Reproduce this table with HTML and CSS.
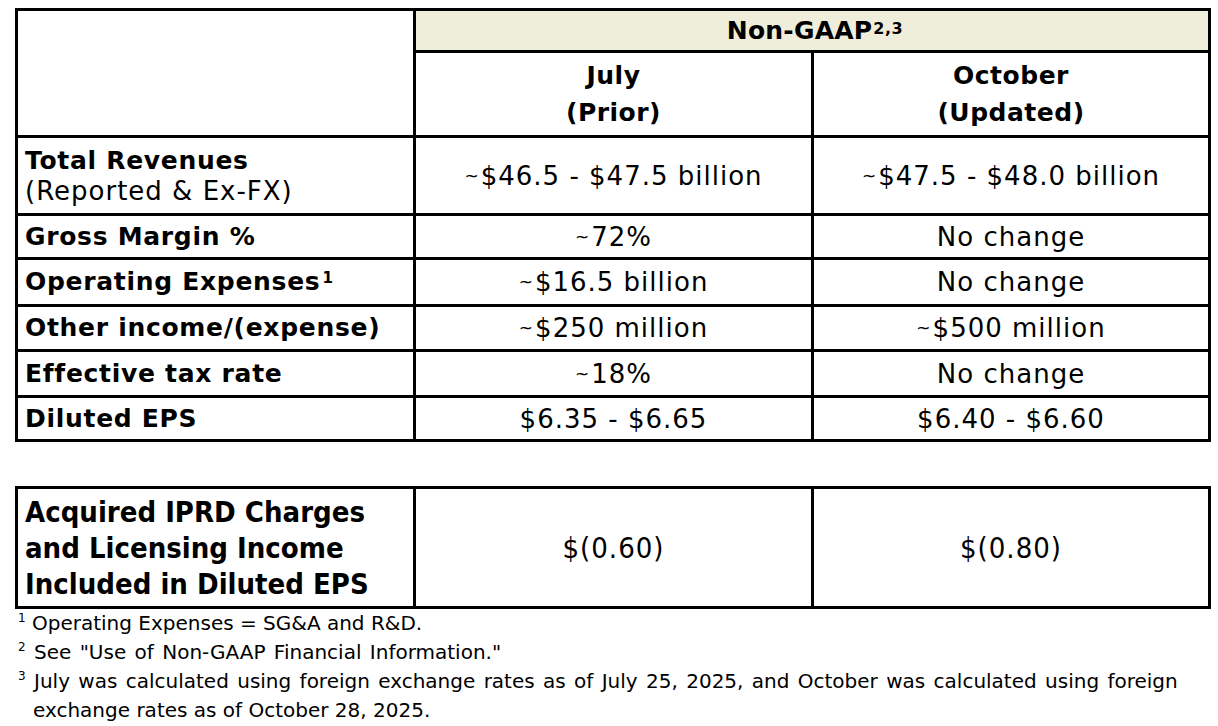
FILE: index.html
```html
<!DOCTYPE html>
<html>
<head>
<meta charset="utf-8">
<link rel="stylesheet" href="styles.css">
</head>
<body>
<div class="page">
  <div class="grid main">
    <div class="cell corner"></div>
    <div class="cell band">Non-GAAP<sup class="sup-head">2,3</sup></div>
    <div class="cell head">July<br>(Prior)</div>
    <div class="cell head">October<br>(Updated)</div>

    <div class="cell label tall"><span class="b">Total Revenues</span><br><span class="reg">(Reported &amp; Ex-FX)</span></div>
    <div class="cell value"><span class="tl">~</span>$46.5 - $47.5 billion</div>
    <div class="cell value"><span class="tl">~</span>$47.5 - $48.0 billion</div>

    <div class="cell label b">Gross Margin %</div>
    <div class="cell value"><span class="tl">~</span>72%</div>
    <div class="cell value">No change</div>

    <div class="cell label b">Operating Expenses<sup class="sup-lbl">1</sup></div>
    <div class="cell value"><span class="tl">~</span>$16.5 billion</div>
    <div class="cell value">No change</div>

    <div class="cell label b">Other income/(expense)</div>
    <div class="cell value"><span class="tl">~</span>$250 million</div>
    <div class="cell value"><span class="tl">~</span>$500 million</div>

    <div class="cell label b">Effective tax rate</div>
    <div class="cell value"><span class="tl">~</span>18%</div>
    <div class="cell value">No change</div>

    <div class="cell label b">Diluted EPS</div>
    <div class="cell value">$6.35 - $6.65</div>
    <div class="cell value">$6.40 - $6.60</div>
  </div>

  <div class="grid second">
    <div class="cell label big">Acquired IPRD Charges<br>and Licensing Income<br>Included in Diluted EPS</div>
    <div class="cell value bigval">$(0.60)</div>
    <div class="cell value bigval">$(0.80)</div>
  </div>

  <div class="notes">
    <p class="note"><sup class="sup-note">1</sup> Operating Expenses = SG&amp;A and R&amp;D.</p>
    <p class="note wide"><sup class="sup-note">2</sup> See "Use of Non-GAAP Financial Information."</p>
    <p class="note wide"><sup class="sup-note">3</sup> July was calculated using foreign exchange rates as of July 25, 2025, and October was calculated using foreign<br><span class="indent">exchange rates as of October 28, 2025.</span></p>
  </div>
</div>
</body>
</html>
```

FILE: styles.css
```css
html, body {
  margin: 0;
  padding: 0;
  background: #ffffff;
}

body {
  font-family: "DejaVu Sans", sans-serif;
  color: #000000;
}

.page {
  padding: 8px 0 0 15px;
}

.grid {
  display: grid;
  grid-template-columns: 395px 395px 394px;
  gap: 3px;
  padding: 3px;
  background: #000000;
  width: max-content;
}

.main {
  grid-template-rows: 39px 82px 75px 41px 44px 42px 43px 41px;
}

.second {
  margin-top: 44px;
  grid-template-rows: 117px;
}

.cell {
  background: #ffffff;
  display: flex;
  align-items: center;
  font-size: 25px;
  line-height: 30px;
}

.corner {
  grid-row: 1 / 3;
  grid-column: 1;
}

.band {
  grid-column: 2 / 4;
  background: #efeedb;
  justify-content: center;
  font-weight: bold;
  letter-spacing: 0.2px;
  padding-left: 6px;
}

.head {
  justify-content: center;
  text-align: center;
  font-weight: bold;
  line-height: 37px;
  letter-spacing: 0.5px;
}

.label {
  padding-left: 7px;
}

.b {
  font-weight: bold;
  letter-spacing: 0.7px;
}

.tall {
  display: block;
  padding-top: 8px;
}

.reg {
  font-size: 26px;
  letter-spacing: 1px;
}

.value {
  justify-content: center;
  text-align: center;
  font-size: 26px;
  letter-spacing: 1px;
}

.tl {
  font-size: 17px;
  letter-spacing: 0;
  margin-right: 2px;
}

.big {
  font-family: "DejaVu Sans Condensed", "DejaVu Sans", sans-serif;
  font-weight: bold;
  font-size: 29px;
  line-height: 36px;
}

.bigval {
  font-family: "DejaVu Sans Condensed", "DejaVu Sans", sans-serif;
  font-size: 29px;
  letter-spacing: 1px;
}

.sup-head {
  font-size: 16px;
  line-height: 0;
  position: relative;
  top: -2px;
  letter-spacing: 0.5px;
  margin-left: 1px;
}

.sup-lbl {
  font-size: 15px;
  line-height: 0;
  position: relative;
  top: -4px;
  margin-left: 2px;
}

.notes {
  padding-left: 3px;
}

.note {
  margin: 0;
  font-size: 20px;
  line-height: 29px;
}

.wide {
  word-spacing: 2px;
}

.sup-note {
  font-size: 12px;
  line-height: 0;
}

.indent {
  padding-left: 15px;
  word-spacing: 0;
}
```
